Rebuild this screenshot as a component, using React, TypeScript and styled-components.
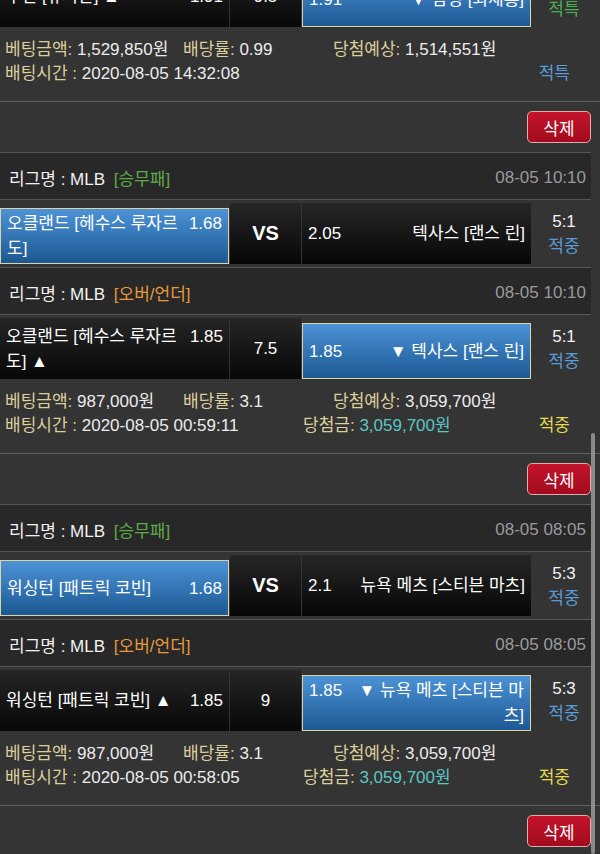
import styled, { createGlobalStyle } from "styled-components";

type Side = "left" | "right";
type Team = { name: string; odds: string; picked?: boolean };
type Game = {
  market?: "승무패" | "오버/언더";
  time?: string;
  home: Team;
  mid: string;
  away: Team;
  score: string;
  result: string;
  resultTone: "blue" | "green";
};
type Bet = {
  games: Game[];
  cut?: boolean;
  amount: string;
  rate: string;
  expected: string;
  betTime: string;
  prize?: string;
  status: string;
  statusTone: "yellow" | "blue";
};

const bets: Bet[] = [
  {
    cut: true,
    games: [
      {
        home: { name: "두산 [유희관] ▲", odds: "1.91" },
        mid: "9.5",
        away: { name: "▼ 삼성 [최채흥]", odds: "1.91", picked: true },
        score: "4:5",
        result: "적특",
        resultTone: "green",
      },
    ],
    amount: "1,529,850원",
    rate: "0.99",
    expected: "1,514,551원",
    betTime: "2020-08-05 14:32:08",
    status: "적특",
    statusTone: "blue",
  },
  {
    games: [
      {
        market: "승무패",
        time: "08-05 10:10",
        home: { name: "오클랜드 [헤수스 루자르도]", odds: "1.68", picked: true },
        mid: "VS",
        away: { name: "텍사스 [랜스 린]", odds: "2.05" },
        score: "5:1",
        result: "적중",
        resultTone: "blue",
      },
      {
        market: "오버/언더",
        time: "08-05 10:10",
        home: { name: "오클랜드 [헤수스 루자르도] ▲", odds: "1.85" },
        mid: "7.5",
        away: { name: "▼ 텍사스 [랜스 린]", odds: "1.85", picked: true },
        score: "5:1",
        result: "적중",
        resultTone: "blue",
      },
    ],
    amount: "987,000원",
    rate: "3.1",
    expected: "3,059,700원",
    betTime: "2020-08-05 00:59:11",
    prize: "3,059,700원",
    status: "적중",
    statusTone: "yellow",
  },
  {
    games: [
      {
        market: "승무패",
        time: "08-05 08:05",
        home: { name: "워싱턴 [패트릭 코빈]", odds: "1.68", picked: true },
        mid: "VS",
        away: { name: "뉴욕 메츠 [스티븐 마츠]", odds: "2.1" },
        score: "5:3",
        result: "적중",
        resultTone: "blue",
      },
      {
        market: "오버/언더",
        time: "08-05 08:05",
        home: { name: "워싱턴 [패트릭 코빈] ▲", odds: "1.85" },
        mid: "9",
        away: { name: "▼ 뉴욕 메츠 [스티븐 마츠]", odds: "1.85", picked: true },
        score: "5:3",
        result: "적중",
        resultTone: "blue",
      },
    ],
    amount: "987,000원",
    rate: "3.1",
    expected: "3,059,700원",
    betTime: "2020-08-05 00:58:05",
    prize: "3,059,700원",
    status: "적중",
    statusTone: "yellow",
  },
];

const tones = {
  blue: "#5b9bd8",
  green: "#4caf50",
  yellow: "#e6da4c",
};

const App = () => {
  return (
    <Page>
      <GlobalStyle />
      {bets.map((bet, i) => (
        <BetCard key={i} bet={bet} />
      ))}
      <Scrollbar />
    </Page>
  );
};
export default App;

const BetCard = ({ bet }: { bet: Bet }) => {
  return (
    <section>
      {bet.games.map((g, i) => (
        <div key={i}>
          {g.market && (
            <LeagueRow>
              <span>
                리그명 : MLB <Market $ou={g.market === "오버/언더"}>[{g.market}]</Market>
              </span>
              <LeagueTime>{g.time}</LeagueTime>
            </LeagueRow>
          )}
          <MatchRow $cut={bet.cut}>
            <TeamCell team={g.home} side="left" />
            <MidCell $vs={g.mid === "VS"}>{g.mid}</MidCell>
            <TeamCell team={g.away} side="right" />
            <ScoreCol>
              <div>{g.score}</div>
              <ResultText $tone={g.resultTone}>{g.result}</ResultText>
            </ScoreCol>
          </MatchRow>
        </div>
      ))}
      <Info>
        <InfoLine $cols="178px 150px 1fr">
          <span>
            <Label>베팅금액:</Label> {bet.amount}
          </span>
          <span>
            <Label>배당률:</Label> {bet.rate}
          </span>
          <span>
            <Label>당첨예상:</Label> {bet.expected}
          </span>
        </InfoLine>
        <InfoLine $cols="298px 1fr auto">
          <span>
            <Label>배팅시간 :</Label> {bet.betTime}
          </span>
          <span>
            {bet.prize && (
              <>
                <Label>당첨금:</Label> <Prize>{bet.prize}</Prize>
              </>
            )}
          </span>
          <ResultText $tone={bet.statusTone}>{bet.status}</ResultText>
        </InfoLine>
      </Info>
      <DeleteRow>
        <DeleteButton>삭제</DeleteButton>
      </DeleteRow>
    </section>
  );
};

const TeamCell = ({ team, side }: { team: Team; side: Side }) => (
  <Cell $picked={team.picked}>
    <CellText $side={side}>
      <Odds $side={side}>{team.odds}</Odds>
      {team.name}
    </CellText>
  </Cell>
);

const GlobalStyle = createGlobalStyle`
  html, body {
    margin: 0;
    padding: 0;
    background: #343434;
  }
  body {
    font-family: "Liberation Sans", "Noto Sans CJK KR", sans-serif;
    color: #eeeeee;
  }
  * {
    box-sizing: border-box;
  }
`;

const Page = styled.div`
  position: relative;
  width: 600px;
  height: 854px;
  overflow: hidden;
  background: #343434;
  font-size: 17px;
`;

const Scrollbar = styled.div`
  position: absolute;
  right: 5px;
  top: 433px;
  bottom: 0;
  width: 4px;
  border-radius: 2px;
  background: #8a8a8a;
`;

const LeagueRow = styled.div`
  height: 48px;
  margin-right: 9px;
  padding: 3px 5px 0 9px;
  display: flex;
  align-items: center;
  justify-content: space-between;
  background: #282828;
  border-top: 1px solid #575757;
  border-bottom: 1px solid #575757;
  color: #f2f2f2;
`;

const Market = styled.span<{ $ou: boolean }>`
  margin-left: 4px;
  color: ${(p) => (p.$ou ? "#e69a3c" : "#5cad4a")};
`;

const LeagueTime = styled.span`
  color: #9a9a9a;
`;

const MatchRow = styled.div<{ $cut?: boolean }>`
  display: grid;
  grid-template-columns: 229px 71px 229px 1fr;
  column-gap: 1px;
  padding: 3px 0 3px;
  margin-top: ${(p) => (p.$cut ? "-37px" : "0")};
`;

const Cell = styled.div<{ $picked?: boolean }>`
  height: ${(p) => (p.$picked ? 56 : 61)}px;
  align-self: end;
  display: flex;
  align-items: center;
  padding: 0 6px;
  line-height: 25px;
  color: #ffffff;
  background: ${(p) =>
    p.$picked ? "linear-gradient(#4c93d6, #1c5893)" : "linear-gradient(#262626, #070707)"};
  border: ${(p) => (p.$picked ? "1px solid #dcd4a2" : "none")};
`;

const CellText = styled.div<{ $side: Side }>`
  width: 100%;
  text-align: ${(p) => (p.$side === "left" ? "left" : "right")};
`;

const Odds = styled.span<{ $side: Side }>`
  float: ${(p) => (p.$side === "left" ? "right" : "left")};
  ${(p) => (p.$side === "left" ? "margin-left: 10px;" : "margin-right: 10px;")}
`;

const MidCell = styled.div<{ $vs: boolean }>`
  height: 61px;
  display: flex;
  align-items: center;
  justify-content: center;
  background: linear-gradient(#262626, #070707);
  color: #ffffff;
  font-weight: ${(p) => (p.$vs ? 700 : 400)};
  font-size: ${(p) => (p.$vs ? 20 : 17)}px;
`;

const ScoreCol = styled.div`
  align-self: center;
  padding-right: 4px;
  display: flex;
  flex-direction: column;
  align-items: center;
  line-height: 25px;
  color: #f2f2f2;
`;

const ResultText = styled.span<{ $tone: keyof typeof tones }>`
  color: ${(p) => tones[p.$tone]};
`;

const Info = styled.div`
  padding: 8px 30px 15px 5px;
`;

const InfoLine = styled.div<{ $cols: string }>`
  display: grid;
  grid-template-columns: ${(p) => p.$cols};
  line-height: 24px;
  color: #ececec;
  white-space: nowrap;
`;

const Label = styled.span`
  color: #dcd09a;
`;

const Prize = styled.span`
  color: #5cc6c2;
`;

const DeleteRow = styled.div`
  display: flex;
  justify-content: flex-end;
  padding: 9px 9px;
  border-top: 1px solid #5e5e5e;
`;

const DeleteButton = styled.button`
  width: 64px;
  height: 32px;
  padding: 0;
  border: 1px solid #e3a9ad;
  border-radius: 5px;
  background: linear-gradient(#c4142a, #a30b1c);
  color: #ffffff;
  font-family: inherit;
  font-size: 17px;
`;
